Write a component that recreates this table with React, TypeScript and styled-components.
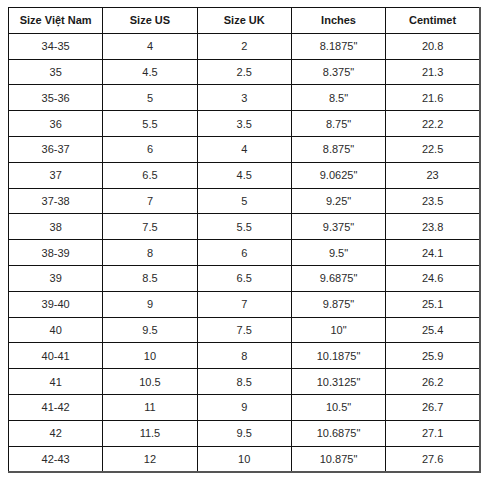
import styled, { createGlobalStyle } from 'styled-components';

const SIZES: [string, string, string, string, string][] = [
  ['34-35', '4', '2', '8.1875"', '20.8'],
  ['35', '4.5', '2.5', '8.375"', '21.3'],
  ['35-36', '5', '3', '8.5"', '21.6'],
  ['36', '5.5', '3.5', '8.75"', '22.2'],
  ['36-37', '6', '4', '8.875"', '22.5'],
  ['37', '6.5', '4.5', '9.0625"', '23'],
  ['37-38', '7', '5', '9.25"', '23.5'],
  ['38', '7.5', '5.5', '9.375"', '23.8'],
  ['38-39', '8', '6', '9.5"', '24.1'],
  ['39', '8.5', '6.5', '9.6875"', '24.6'],
  ['39-40', '9', '7', '9.875"', '25.1'],
  ['40', '9.5', '7.5', '10"', '25.4'],
  ['40-41', '10', '8', '10.1875"', '25.9'],
  ['41', '10.5', '8.5', '10.3125"', '26.2'],
  ['41-42', '11', '9', '10.5"', '26.7'],
  ['42', '11.5', '9.5', '10.6875"', '27.1'],
  ['42-43', '12', '10', '10.875"', '27.6'],
];

const HEADERS = ['Size Việt Nam', 'Size US', 'Size UK', 'Inches', 'Centimet'];

const GlobalStyle = createGlobalStyle`
  html, body {
    margin: 0;
    padding: 0;
    background: #ffffff;
  }
`;

const Page = styled.main`
  padding: 7px 0 0 8px;
  font-family: 'Liberation Sans', Arial, sans-serif;
`;

const Table = styled.table`
  width: 473px;
  table-layout: fixed;
  border-collapse: collapse;
  border-top: 1px solid #444;
  border-left: 1px solid #444;
  border-right: 2px solid #555;
  border-bottom: 2px solid #555;
`;

const Row = styled.tr`
  height: 25.8px;
`;

const HeadCell = styled.th`
  border: 1px solid #111;
  padding: 0;
  font-size: 11px;
  font-weight: bold;
  color: #1a1a1a;
  text-align: center;
  vertical-align: middle;
`;

const Cell = styled.td`
  border: 1px solid #111;
  padding: 0;
  font-size: 11px;
  color: #2a2a2a;
  text-align: center;
  vertical-align: middle;
`;

const App = () => {
  return (
    <>
      <GlobalStyle />
      <Page>
        <Table>
          <thead>
            <Row>
              {HEADERS.map((h) => (
                <HeadCell key={h}>{h}</HeadCell>
              ))}
            </Row>
          </thead>
          <tbody>
            {SIZES.map((row) => (
              <Row key={row[0]}>
                {row.map((value, i) => (
                  <Cell key={i}>{value}</Cell>
                ))}
              </Row>
            ))}
          </tbody>
        </Table>
      </Page>
    </>
  );
};

export default App;
